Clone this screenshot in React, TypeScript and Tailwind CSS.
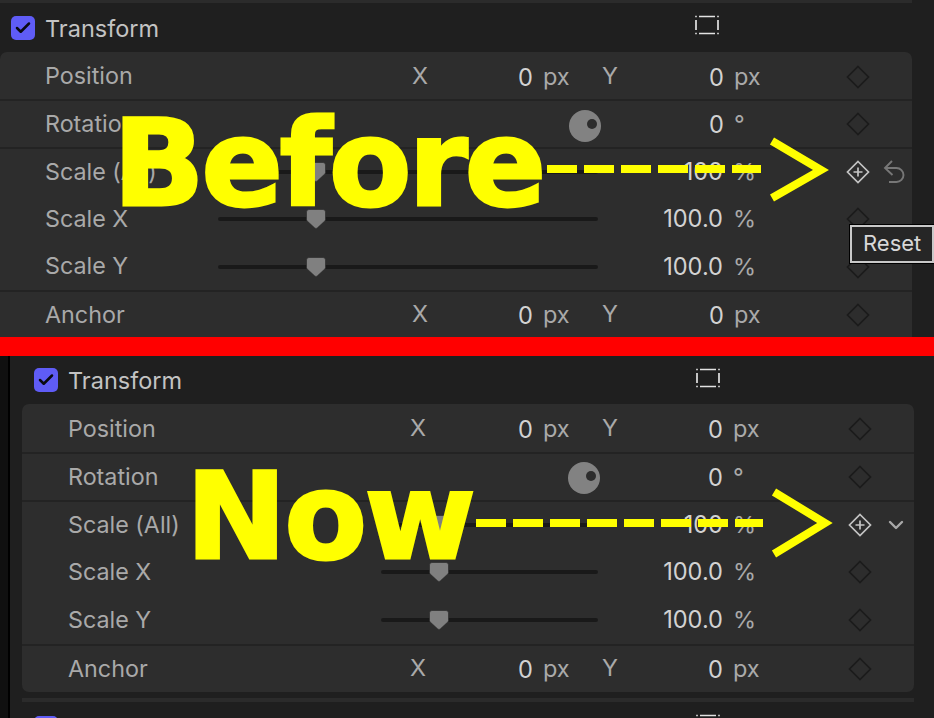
import React from "react";
import { Check, ChevronDown } from "lucide-react";

const UI = { fontFamily: "Inter, 'Liberation Sans', sans-serif" };
const BIG = { fontFamily: "'DejaVu Sans', sans-serif" };

function Diamond({ active }: { active?: boolean }) {
  const c = active ? "#c4c4c4" : "#1b1b1b";
  return (
    <svg width="24" height="24" viewBox="0 0 24 24" fill="none" stroke={c} strokeWidth="1.7">
      <path d="M12 1.5 22.5 12 12 22.5 1.5 12Z" />
      {active && <path d="M12 7.5v9M7.5 12h9" />}
    </svg>
  );
}

function UndoIcon() {
  return (
    <svg width="24" height="24" viewBox="0 0 24 24" fill="none" stroke="#777777" strokeWidth="1.9">
      <path d="M10 1 3 8l7.5 7" />
      <path d="M3 8h11.5a7 7 0 0 1 0 14H7" />
    </svg>
  );
}

function Thumb() {
  return (
    <svg width="22" height="22" viewBox="0 0 22 22" className="absolute -top-[9px] left-0">
      <path d="M4 1.5h14a2.5 2.5 0 0 1 2.5 2.5v7.5a2 2 0 0 1-.7 1.5L12.2 20a1.8 1.8 0 0 1-2.4 0L2.2 13a2 2 0 0 1-.7-1.5V4A2.5 2.5 0 0 1 4 1.5Z" fill="#808080" stroke="#262626" strokeWidth="0.6" />
    </svg>
  );
}

function Slider({ w, thumb }: { w: string; thumb: string }) {
  return (
    <div className={`relative h-[4px] rounded-full bg-[#191919] ${w}`}>
      <div className={`absolute top-0 ${thumb}`}>
        <Thumb />
      </div>
    </div>
  );
}

function Right({ active, extra }: { active?: boolean; extra?: React.ReactNode }) {
  return (
    <div className="ml-auto flex w-[69px] shrink-0 items-center">
      <div className="flex w-[30px] justify-center">
        <Diamond active={active} />
      </div>
      {extra && <div className="ml-[6px] flex w-[30px] justify-center">{extra}</div>}
    </div>
  );
}

function Label({ children, w }: { children: React.ReactNode; w: string }) {
  return <div className={`shrink-0 text-[23.3px] text-[#a9a9a9] ${w}`}>{children}</div>;
}

function Value({ children, w }: { children: React.ReactNode; w: string }) {
  return <div className={`shrink-0 text-right text-[23.6px] text-[#d2d2d2] ${w}`}>{children}</div>;
}

function Unit({ children, w }: { children: React.ReactNode; w: string }) {
  return <div className={`ml-[10px] shrink-0 text-[23.5px] text-[#a9a9a9] ${w}`}>{children}</div>;
}

function XY({ name, labelW, firstValW, firstUnitW, secondValW }: { name: string; labelW: string; firstValW: string; firstUnitW: string; secondValW: string }) {
  return (
    <>
      <Label w={labelW}>{name}</Label>
      <div className="w-[40px] shrink-0 -translate-y-[1px] text-center text-[23.5px] text-[#a9a9a9]">X</div>
      <Value w={firstValW}><span className="relative top-[1px]">0</span></Value>
      <Unit w={firstUnitW}>px</Unit>
      <div className="w-[40px] shrink-0 -translate-y-[1px] text-center text-[23.5px] text-[#a9a9a9]">Y</div>
      <Value w={secondValW}><span className="relative top-[1px]">0</span></Value>
      <Unit w="w-[40px]">px</Unit>
    </>
  );
}

function Row({ children, divider, pad }: { children: React.ReactNode; divider?: boolean; pad: string }) {
  return (
    <div className={`flex items-center ${pad} ${divider ? "border-b-2 border-[#232323]" : ""}`}>
      {children}
    </div>
  );
}

function Checkbox() {
  return (
    <div className="flex h-[24px] w-[24px] shrink-0 items-center justify-center rounded-[5px] bg-[#5f5cf6]">
      <Check size={18} strokeWidth={3.4} color="#0a0a12" />
    </div>
  );
}

function TransformIcon() {
  return (
    <svg width="26" height="22" viewBox="0 0 26 22" fill="none" stroke="#e2e2e2" strokeWidth="1.7">
      <path d="M5 2.5h16M5 19.5h16M2 6v10M24 6v10" />
      <path d="M1.2 2.5h1.6M23.2 2.5h1.6M1.2 19.5h1.6M23.2 19.5h1.6" />
    </svg>
  );
}

function Dial({ shift }: { shift: string }) {
  return (
    <div className={`relative h-[32px] w-[32px] shrink-0 rounded-full bg-[#828282] ${shift}`}>
      <div className="absolute left-[18px] top-[9px] h-[10px] w-[10px] rounded-full bg-[#2d2d2d]" />
    </div>
  );
}

function Before() {
  return (
    <section className="relative h-[337px] shrink-0 overflow-hidden">
      <div className="h-[3px] w-[912px] bg-[#2b2b2b]" />
      <div className="flex h-[49px] items-center pl-[11px]">
        <Checkbox />
        <div className="ml-[10px] w-[649px] pt-[2px] text-[23.5px] text-[#c3c3c3]">Transform</div>
        <div className="-mt-[5px]"><TransformIcon /></div>
      </div>
      <div className="w-[912px] rounded-t-[7px] bg-[#2d2d2d] pb-[10px]">
        <Row divider pad="h-[49px] pl-[45px] pt-[2px]"><XY name="Position" labelW="w-[355px]" firstValW="w-[93px]" firstUnitW="w-[47px]" secondValW="w-[94px]" /><Right /></Row>
        <Row divider pad="h-[48px] pl-[45px]">
          <Label w="w-[524px]">Rotation</Label>
          <Dial shift="translate-y-[2px]" />
          <Value w="w-[123px]"><span className="relative top-[1px]">0</span></Value>
          <Unit w="w-[39px]">°</Unit>
          <Right />
        </Row>
        <Row pad="h-[48px] pl-[45px] pb-[2px]">
          <Label w="w-[173px]">Scale (All)</Label>
          <Slider w="w-[380px]" thumb="left-[87px]" />
          <Value w="w-[125px]">100</Value>
          <Unit w="w-[40px]">%</Unit>
          <Right active extra={<UndoIcon />} />
        </Row>
        <Row pad="h-[47px] pl-[45px] pb-[3px]">
          <Label w="w-[173px]">Scale X</Label>
          <Slider w="w-[380px]" thumb="left-[87px]" />
          <Value w="w-[125px]">100.0</Value>
          <Unit w="w-[40px]">%</Unit>
          <Right />
        </Row>
        <Row divider pad="h-[48px] pl-[45px] pb-[1px]">
          <Label w="w-[173px]">Scale Y</Label>
          <Slider w="w-[380px]" thumb="left-[87px]" />
          <Value w="w-[125px]">100.0</Value>
          <Unit w="w-[40px]">%</Unit>
          <Right />
        </Row>
        <Row pad="h-[46px] pl-[45px]"><XY name="Anchor" labelW="w-[355px]" firstValW="w-[93px]" firstUnitW="w-[47px]" secondValW="w-[94px]" /><Right /></Row>
      </div>

      <div style={BIG} className="absolute left-[113px] top-[89px] text-[120px] font-bold leading-[150px] tracking-[-3px] text-[#ffff00] [-webkit-text-stroke:3px_#ffff00]">Before</div>
      <svg className="absolute left-[540px] top-[130px]" width="300" height="80" viewBox="0 0 300 80">
        <path d="M7 39H221" stroke="#ffff00" strokeWidth="8" strokeDasharray="30 7" />
        <path d="M232 11 281 40 232 68" fill="none" stroke="#ffff00" strokeWidth="8" />
      </svg>
      <div className="absolute left-[850px] top-[225px] flex h-[38px] items-center border-2 border-[#c9c9c9] bg-[#262626] px-[11px] pb-[2px] text-[22px] text-[#d8d8d8] shadow-[0_0_0_1px_#000]">Reset</div>
    </section>
  );
}

function Now() {
  return (
    <section className="relative flex h-[362px] shrink-0 overflow-hidden">
      <div className="h-full w-[8px] shrink-0 bg-[#101010]" />
      <div className="h-full w-[2px] shrink-0 bg-[#000000]" />
      <div className="min-w-0 flex-1 bg-[#1f1f1f]">
        <div className="flex h-[48px] items-center pl-[24px]">
          <Checkbox />
          <div className="ml-[10px] w-[627px] pt-[2px] text-[23.5px] text-[#c3c3c3]">Transform</div>
          <div className="-mt-[4px]"><TransformIcon /></div>
        </div>
        <div className="ml-[12px] w-[892px] rounded-[7px] bg-[#2d2d2d]">
          <Row divider pad="h-[50px] pl-[46px] pt-[2px]"><XY name="Position" labelW="w-[330px]" firstValW="w-[95px]" firstUnitW="w-[47px]" secondValW="w-[93px]" /><Right /></Row>
          <Row divider pad="h-[48px] pl-[46px]">
            <Label w="w-[500px]">Rotation</Label>
            <Dial shift="translate-y-[1px]" />
            <Value w="w-[123px]"><span className="relative top-[1px]">0</span></Value>
            <Unit w="w-[40px]">°</Unit>
            <Right />
          </Row>
          <Row pad="h-[48px] pl-[46px] pb-[2px]">
            <Label w="w-[313px]">Scale (All)</Label>
            <Slider w="w-[217px]" thumb="left-[47px]" />
            <Value w="w-[125px]">100</Value>
            <Unit w="w-[40px]">%</Unit>
            <Right active extra={<ChevronDown size={24} strokeWidth={2.4} color="#a8a8a8" />} />
          </Row>
          <Row pad="h-[48px] pl-[46px] pb-[4px]">
            <Label w="w-[313px]">Scale X</Label>
            <Slider w="w-[217px]" thumb="left-[47px]" />
            <Value w="w-[125px]">100.0</Value>
            <Unit w="w-[40px]">%</Unit>
            <Right />
          </Row>
          <Row divider pad="h-[48px] pl-[46px] pb-[2px]">
            <Label w="w-[313px]">Scale Y</Label>
            <Slider w="w-[217px]" thumb="left-[47px]" />
            <Value w="w-[125px]">100.0</Value>
            <Unit w="w-[40px]">%</Unit>
            <Right />
          </Row>
          <Row pad="h-[46px] pl-[46px]"><XY name="Anchor" labelW="w-[330px]" firstValW="w-[95px]" firstUnitW="w-[47px]" secondValW="w-[93px]" /><Right /></Row>
        </div>
        <div className="ml-[12px] mt-[6px] h-[4px] w-[892px] bg-[#2b2b2b]" />
        <div className="flex pl-[24px] pt-[14px]">
          <div className="h-[24px] w-[24px] shrink-0 rounded-[5px] bg-[#5f5cf6]" />
          <div className="ml-[627px] -mt-[3px] shrink-0 pl-[10px]"><TransformIcon /></div>
        </div>
      </div>

      <div style={BIG} className="absolute left-[186px] top-[86px] text-[120px] font-bold leading-[150px] tracking-[-2px] text-[#ffff00] [-webkit-text-stroke:3px_#ffff00]">Now</div>
      <svg className="absolute left-[470px] top-[130px]" width="370" height="80" viewBox="0 0 370 80">
        <path d="M6 37H293" stroke="#ffff00" strokeWidth="8" strokeDasharray="30 7" />
        <path d="M304 6 355 37 304 68" fill="none" stroke="#ffff00" strokeWidth="8" />
      </svg>
    </section>
  );
}

export default function App() {
  return (
    <div style={UI} className="flex h-[718px] w-[934px] flex-col overflow-hidden bg-[#1f1f1f]">
      <Before />
      <div className="h-[19px] shrink-0 bg-[#ff0000]" />
      <Now />
    </div>
  );
}
